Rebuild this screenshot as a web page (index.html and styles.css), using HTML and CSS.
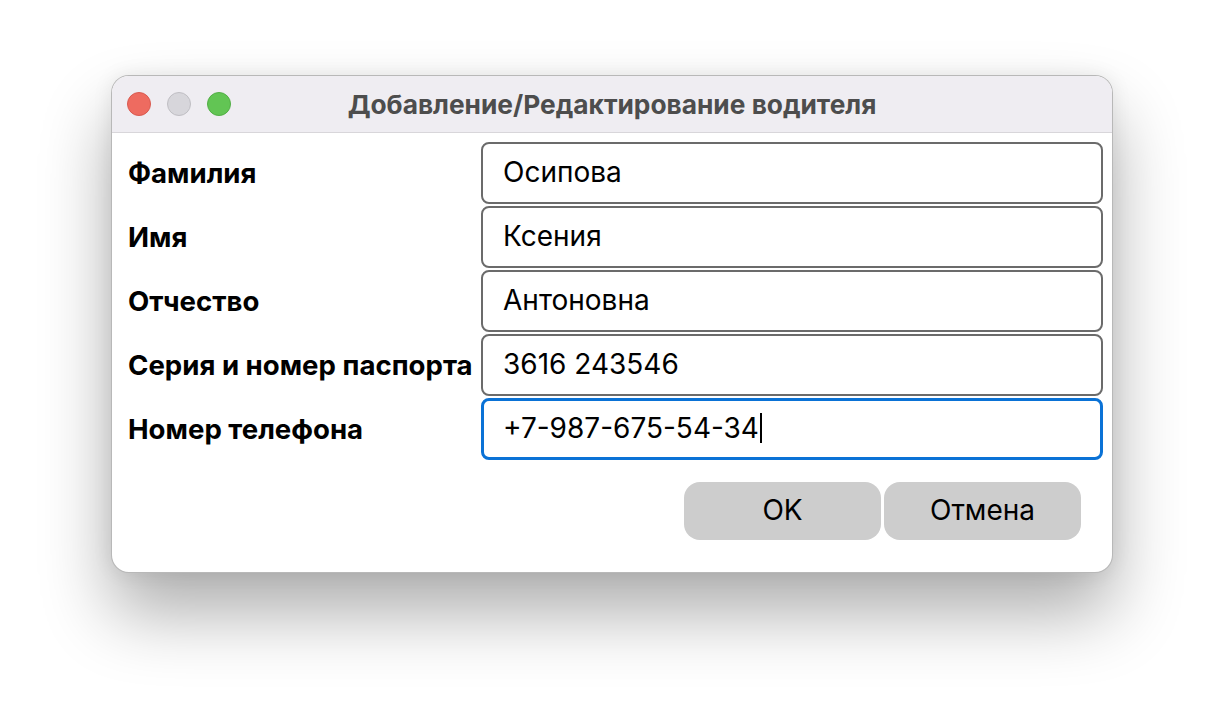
FILE: index.html
```html
<!DOCTYPE html>
<html lang="ru">
<head>
<meta charset="utf-8">
<title>Добавление/Редактирование водителя</title>
<link rel="stylesheet" href="styles.css">
</head>
<body>
<div class="window">
  <div class="titlebar">
    <div class="lights">
      <span class="light red"></span>
      <span class="light gray"></span>
      <span class="light green"></span>
    </div>
    <div class="title">Добавление/Редактирование водителя</div>
  </div>
  <div class="content">
    <div class="form">
      <div class="label">Фамилия</div>
      <div class="field">Осипова</div>
      <div class="label">Имя</div>
      <div class="field">Ксения</div>
      <div class="label">Отчество</div>
      <div class="field">Антоновна</div>
      <div class="label">Серия и номер паспорта</div>
      <div class="field">3616 243546</div>
      <div class="label">Номер телефона</div>
      <div class="field focused">+7-987-675-54-34<span class="caret"></span></div>
    </div>
    <div class="buttons">
      <button class="btn">OK</button>
      <button class="btn">Отмена</button>
    </div>
  </div>
</div>
</body>
</html>
```

FILE: styles.css
```css
html, body {
  margin: 0;
  padding: 0;
  background: #ffffff;
  height: 100%;
}
body {
  box-sizing: border-box;
  padding: 75px 0 0 111px;
  font-family: Inter, "Liberation Sans", Arial, sans-serif;
}
.window {
  width: 1002px;
  height: 498px;
  box-sizing: border-box;
  border-radius: 18px;
  background: #ffffff;
  border: 1px solid rgba(0, 0, 0, 0.28);
  box-shadow: 0 40px 70px rgba(0, 0, 0, 0.32), 0 0 20px rgba(0, 0, 0, 0.08);
  overflow: hidden;
  display: flex;
  flex-direction: column;
}
.titlebar {
  height: 56px;
  flex: 0 0 auto;
  background: #efedf2;
  border-bottom: 1px solid #d8d6da;
  display: flex;
  align-items: center;
  justify-content: center;
  position: relative;
}
.lights {
  position: absolute;
  left: 15px;
  top: 16px;
  display: flex;
  gap: 16px;
}
.light {
  width: 24px;
  height: 24px;
  box-sizing: border-box;
  border-radius: 50%;
  display: block;
}
.red { background: #ee6b60; border: 1px solid #d85a50; }
.gray { background: #d7d6db; border: 1px solid #bfbec3; }
.green { background: #62c554; border: 1px solid #52ae46; }
.title {
  font-size: 26.3px;
  font-weight: 700;
  color: #4d4d4d;
  margin-top: 1px;
}
.content {
  flex: 1 1 auto;
  padding: 9px 9px 0 16px;
  display: flex;
  flex-direction: column;
}
.form {
  display: grid;
  grid-template-columns: 353px 1fr;
  row-gap: 2px;
}
.label {
  font-size: 27.6px;
  font-weight: 700;
  color: #000;
  display: flex;
  align-items: center;
  height: 62px;
  white-space: nowrap;
}
.field {
  height: 62px;
  box-sizing: border-box;
  border: 2px solid #6b6b6b;
  border-radius: 8px;
  padding: 0 0 2px 20px;
  font-size: 28px;
  color: #000;
  display: flex;
  align-items: center;
}
.field.focused {
  border: 3px solid #0a72d6;
  padding-left: 19px;
}
.caret {
  display: inline-block;
  width: 2px;
  height: 30px;
  background: #000;
  margin-left: 1px;
}
.buttons {
  display: flex;
  justify-content: flex-end;
  gap: 3px;
  margin-top: 22px;
  padding-right: 22px;
}
.btn {
  width: 197px;
  height: 58px;
  border: none;
  border-radius: 16px;
  background: #cdcdcd;
  font-family: Inter, "Liberation Sans", Arial, sans-serif;
  font-size: 28px;
  color: #000;
  padding: 0 0 2px 0;
}
```
